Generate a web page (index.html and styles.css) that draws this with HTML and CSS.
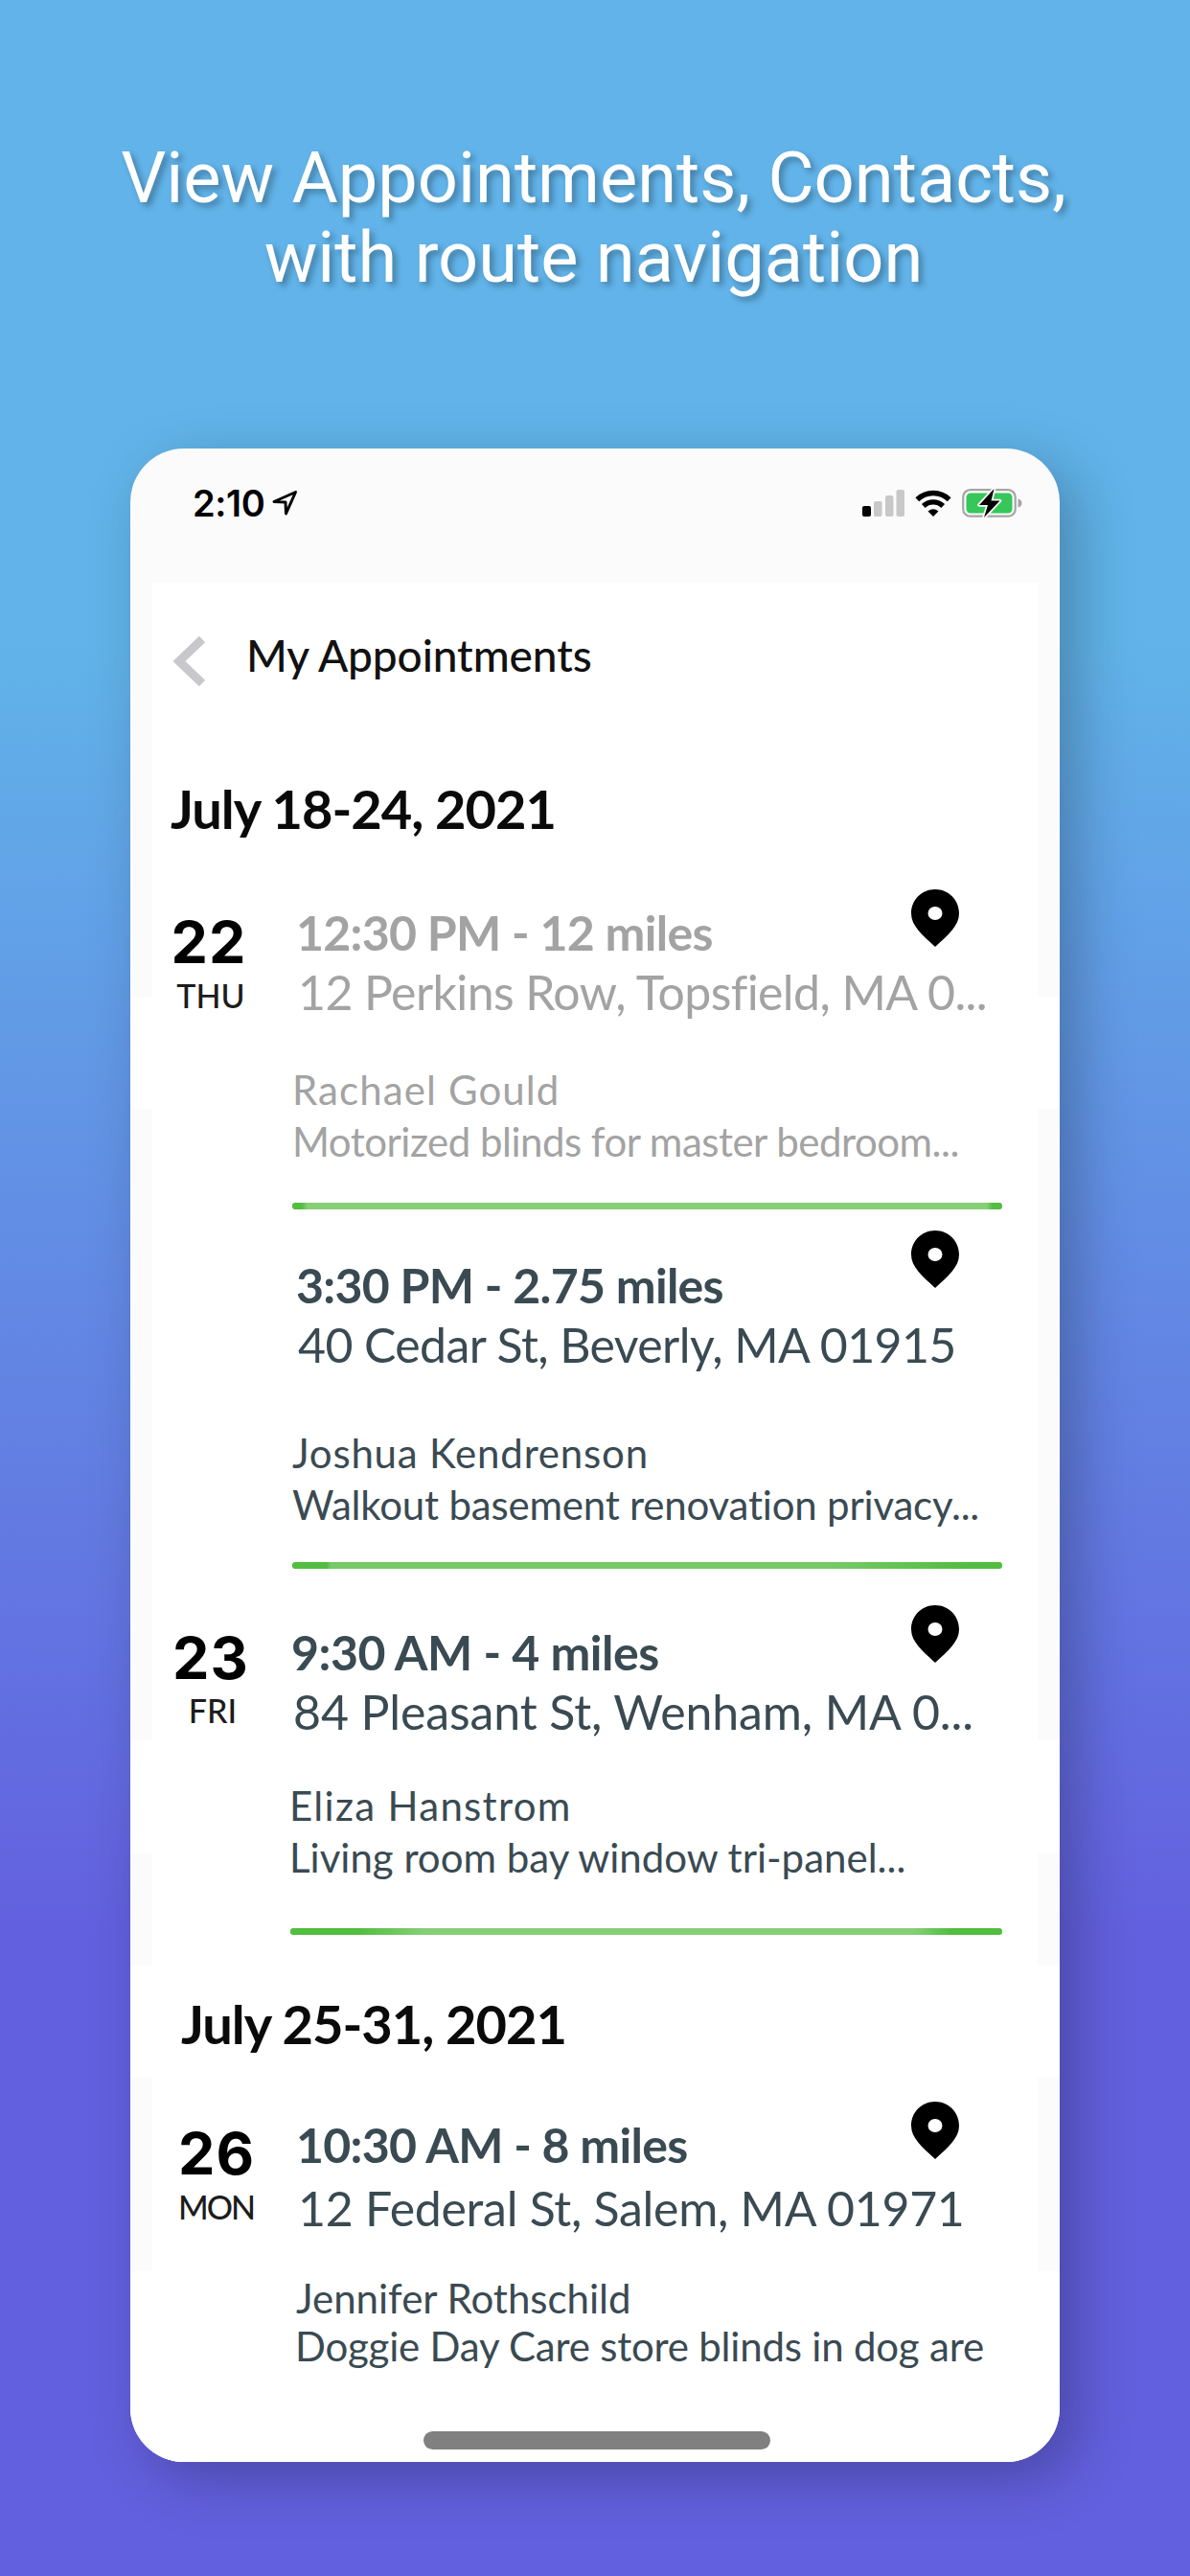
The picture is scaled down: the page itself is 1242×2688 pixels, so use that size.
FILE: index.html
```html
<!DOCTYPE html>
<html lang="en">
<head>
    <meta charset="UTF-8">
    <meta name="viewport" content="width=device-width, initial-scale=1.0">
    <title>My Appointments</title>
    <link rel="stylesheet" href="styles.css">
</head>
<body>
    <!-- pin shape shared by every appointment -->
    <svg class="defs" width="0" height="0">
        <symbol id="pin" viewBox="0 0 50 60">
            <path fill-rule="evenodd" d="M25 0C11 0 0 11 0 25c0 13 11 22 25 35 14-13 25-22 25-35C50 11 39 0 25 0zm0 18a7.5 7 0 1 1 0 14 7.5 7 0 0 1 0-14z"/>
        </symbol>
    </svg>

    <h1 class="headline">View Appointments, Contacts,<br>with route navigation</h1>

    <div class="phone">
        <div class="status-bar">
            <div class="status-left">
                <span class="time">2:10</span>
                <svg class="location" width="27" height="26" viewBox="0 0 27 26">
                    <path d="M2 11.5L24.5 1.5 14.5 24 14 12z" fill="none" stroke="#000" stroke-width="3" stroke-linejoin="round"/>
                </svg>
            </div>
            <div class="status-right">
                <svg class="signal" width="44" height="28" viewBox="0 0 44 28">
                    <rect x="0" y="17" width="9" height="11" rx="2" fill="#000"/>
                    <rect x="12" y="12" width="8.500" height="16" rx="2" fill="#c8c8c8"/>
                    <rect x="24" y="6" width="8.500" height="22" rx="2" fill="#c8c8c8"/>
                    <rect x="35.500" y="0" width="8.500" height="28" rx="2" fill="#c8c8c8"/>
                </svg>
                <svg class="wifi" width="38" height="28" viewBox="0 0 38 28">
                    <path d="M2.300 10.300A24 24 0 0 1 35.700 10.300M8.800 17A14.600 14.600 0 0 1 29.200 17" fill="none" stroke="#000" stroke-width="5.400"/>
                    <path d="M19 28L13.500 22.500Q19 18 24.500 22.500z"/>
                </svg>
                <svg class="battery" width="63" height="32" viewBox="0 0 63 32">
                    <rect x="1.200" y="2.200" width="54.500" height="27.500" rx="7.500" fill="none" stroke="#a5a5a5" stroke-width="2.200"/>
                    <rect x="4.500" y="5.500" width="48" height="21" rx="4.500" fill="#35c759"/>
                    <path d="M58.500 11.500c2.500.5 4 2.300 4 4.500s-1.500 4-4 4.500z" fill="#a5a5a5"/>
                    <path d="M33.500 1L18 18h9l-4 13 16.500-17.500h-9z" fill="#000" stroke="#fbfbfb" stroke-width="3.600" stroke-linejoin="round" paint-order="stroke"/>
                </svg>
            </div>
        </div>

        <div class="page">
            <div class="page-header">
                <svg class="back" width="34" height="52" viewBox="0 0 34 52">
                    <path d="M30 3L6 26l24 23" fill="none" stroke="#c7c7cc" stroke-width="9"/>
                </svg>
                <span class="page-title">My Appointments</span>
            </div>

            <h2 class="week">July 18-24, 2021</h2>

            <div class="appt appt-1 past">
                <div class="day">
                    <div class="day-number">22</div>
                    <div class="day-name">THU</div>
                </div>
                <div class="info">
                    <div class="top-row">
                        <span class="when">12:30 PM - 12 miles</span>
                        <svg class="pin"><use href="#pin"/></svg>
                    </div>
                    <div class="address">12 Perkins Row, Topsfield, MA 0...</div>
                    <div class="name">Rachael Gould</div>
                    <div class="note">Motorized blinds for master bedroom...</div>
                    <div class="divider"></div>
                </div>
            </div>

            <div class="appt appt-2">
                <div class="day"></div>
                <div class="info">
                    <div class="top-row">
                        <span class="when">3:30 PM - 2.75 miles</span>
                        <svg class="pin"><use href="#pin"/></svg>
                    </div>
                    <div class="address">40 Cedar St, Beverly, MA 01915</div>
                    <div class="name">Joshua Kendrenson</div>
                    <div class="note">Walkout basement renovation privacy...</div>
                    <div class="divider"></div>
                </div>
            </div>

            <div class="appt appt-3">
                <div class="day">
                    <div class="day-number">23</div>
                    <div class="day-name">FRI</div>
                </div>
                <div class="info">
                    <div class="top-row">
                        <span class="when">9:30 AM - 4 miles</span>
                        <svg class="pin"><use href="#pin"/></svg>
                    </div>
                    <div class="address">84 Pleasant St, Wenham, MA 0...</div>
                    <div class="name">Eliza Hanstrom</div>
                    <div class="note">Living room bay window tri-panel...</div>
                    <div class="divider"></div>
                </div>
            </div>

            <h2 class="week week-2">July 25-31, 2021</h2>

            <div class="appt appt-4">
                <div class="day">
                    <div class="day-number">26</div>
                    <div class="day-name">MON</div>
                </div>
                <div class="info">
                    <div class="top-row">
                        <span class="when">10:30 AM - 8 miles</span>
                        <svg class="pin"><use href="#pin"/></svg>
                    </div>
                    <div class="address">12 Federal St, Salem, MA 01971</div>
                    <div class="name">Jennifer Rothschild</div>
                    <div class="note">Doggie Day Care store blinds in dog are</div>
                </div>
            </div>

            <div class="home-indicator"></div>
        </div>
    </div>
</body>
</html>
```
FILE: styles.css
```css
* {
    box-sizing: border-box;
}

body {
    margin: 0;
    width: 1242px;
    height: 2688px;
    overflow: hidden;
    background: linear-gradient(#61b3e9 25%, #6360df 75%);
    font-family: Lato, "Liberation Sans", sans-serif;
}

.defs {
    position: absolute;
}

.headline {
    margin: 0;
    padding: 144px 3px 0 0;
    font-family: Roboto, sans-serif;
    font-size: 74px;
    font-weight: 400;
    line-height: 83px;
    text-align: center;
    color: #fff;
    text-shadow: 4px 4px 6px rgba(0, 0, 0, 0.3);
}

.phone {
    width: 970px;
    height: 2101px;
    margin: 158px auto 0;
    background: #fbfbfb;
    border-radius: 56px;
    box-shadow: 18px 18px 60px rgba(0, 0, 0, 0.25);
    overflow: hidden;
}

/* status bar */
.status-bar {
    height: 140px;
    padding: 34px 39px 60px 65px;
    display: flex;
    justify-content: space-between;
}

.status-left, .status-right {
    display: flex;
    align-items: center;
}

.time {
    font-family: Inter, sans-serif;
    font-size: 38px;
    font-weight: 600;
    line-height: 46px;
    letter-spacing: -0.4px;
}

.location {
    margin-left: 8px;
}

.wifi {
    margin-left: 11px;
}

.battery {
    margin-left: 11px;
}

/* page: white panel with grey gutters on both sides */
.page {
    height: 1961px;
    padding: 45px 60px 0 42px;
    background:
        linear-gradient(#fff, #fff) center / 924px 100% no-repeat,
        linear-gradient(#fbfbfb 432px, #fff 432px 549px, #fbfbfb 549px 1208px, #fff 1208px 1326px, #fbfbfb 1326px 1443px, #fff 1443px 1560px, #fbfbfb 1560px 1762px, #fff 1762px);
}

.page-header {
    display: flex;
    height: 63px;
}

.back {
    margin: 11px 42px 0 3px;
}

.page-title {
    font-size: 46px;
    font-weight: 500;
    line-height: 62px;
    letter-spacing: -0.1px;
    color: #111;
}

.week {
    margin: 98px 0 0;
    font-size: 56px;
    font-weight: 700;
    line-height: 60px;
    letter-spacing: -1px;
    color: #0a0a0a;
}

.week-2 {
    margin: 63px 0 0 11px;
}

.appt {
    display: grid;
    grid-template-columns: 84px 741px;
    column-gap: 43px;
    color: #3a4a52;
}

.past {
    color: #a3a3a3;
}

.day {
    padding-top: 10px;
    text-align: center;
    color: #000;
}

.day-number {
    font-family: Inter, sans-serif;
    font-size: 61px;
    font-weight: 700;
    line-height: 63px;
    letter-spacing: 1px;
    margin-left: -4px;
}

.day-name {
    margin-top: 4px;
    font-size: 34px;
    font-weight: 500;
    line-height: 40px;
    color: #1c1c1c;
}

.info {
    white-space: nowrap;
}

.top-row {
    display: flex;
    justify-content: space-between;
    height: 62px;
    padding: 0 45px 0 4px;
}

.when {
    font-size: 50px;
    font-weight: 700;
    line-height: 62px;
    letter-spacing: -0.7px;
}

.pin {
    width: 50px;
    height: 60px;
    margin-top: -14px;
    fill: #000;
}

.address {
    padding-left: 6px;
    font-size: 50px;
    line-height: 62px;
    letter-spacing: -0.6px;
}

.name {
    margin-top: 44px;
    font-size: 42px;
    line-height: 54px;
    letter-spacing: 0.8px;
}

.note {
    font-size: 42px;
    line-height: 54px;
    letter-spacing: -0.2px;
}

.divider {
    height: 7px;
    margin-top: 37px;
    border-radius: 3px;
    background: linear-gradient(to right, #52bd3f 10px, #86cf77 16px, #86cf77 725px, #52bd3f 731px);
}

/* spacing of the single appointments */
.appt-1 {
    margin-top: 68px;
}

.appt-1 .name {
    letter-spacing: 1.1px;
}

.appt-1 .note {
    letter-spacing: -0.5px;
}

.appt-2 {
    margin-top: 48px;
}

.appt-2 .pin {
    margin-top: -26px;
}

.appt-2 .name {
    margin-top: 55px;
}

.appt-2 .divider {
    margin-top: 33px;
    background: linear-gradient(to right, #52bd3f 36px, #78c968 40px, #78c968 560px, #52bd3f 705px);
}

.appt-3 {
    margin-top: 56px;
}

.appt-3 .day {
    padding: 6px 0 0 4px;
}

.appt-3 .day-name {
    margin-top: 3px;
}

.appt-3 .when,
.appt-3 .address {
    margin-left: -5px;
    letter-spacing: -0.5px;
}

.appt-3 .address {
    letter-spacing: -0.1px;
}

.appt-3 .name {
    margin: 40px 0 0 -3px;
    letter-spacing: 1.3px;
}

.appt-3 .note {
    margin-left: -3px;
    letter-spacing: 0;
}

.appt-3 .pin {
    margin-top: -18px;
}

.appt-3 .divider {
    margin: 47px 0 0 -2px;
    background: linear-gradient(to right, #52bd3f 70px, #86cf77 140px, #86cf77 650px, #52bd3f 690px);
}

.appt-4 {
    margin-top: 65px;
}

.appt-4 .day {
    padding: 9px 0 0 12px;
}

.appt-4 .day-name {
    margin-left: -4px;
    letter-spacing: -2px;
}

.appt-4 .address {
    margin-top: 4px;
    letter-spacing: -0.3px;
}

.appt-4 .name {
    margin: 36px 0 0 4px;
    letter-spacing: 0;
}

.appt-4 .note {
    margin: -4px 0 0 3px;
}

.home-indicator {
    width: 362px;
    height: 19px;
    margin: 62px 0 0 264px;
    border-radius: 10px;
    background: #808080;
}
```
